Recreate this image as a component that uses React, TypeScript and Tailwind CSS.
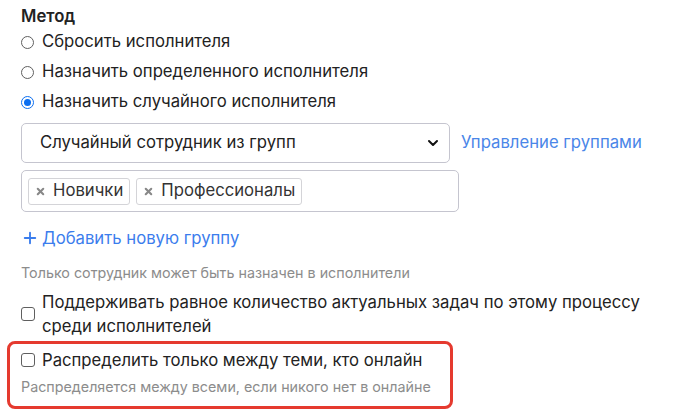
import { ChevronDown, Plus, X } from "lucide-react";

function Radio({ checked, label }: { checked?: boolean; label: string }) {
    return (
        <label className="flex items-center h-[30px] gap-[8px]">
            <span
                className={
                    checked
                        ? "w-[13px] h-[13px] rounded-full border-[1.5px] border-[#0b6ef0] flex items-center justify-center"
                        : "w-[13px] h-[13px] rounded-full border-[1.2px] border-[#5f5f5f]"
                }
            >
                {checked && <span className="w-[7px] h-[7px] rounded-full bg-[#0b6ef0]" />}
            </span>
            <span>{label}</span>
        </label>
    );
}

function Checkbox() {
    return <span className="w-[14px] h-[14px] shrink-0 rounded-[3px] border-[1.2px] border-[#5f5f5f] bg-white" />;
}

function Tag({ label }: { label: string }) {
    return (
        <span className="flex items-center h-[27px] px-[6px] gap-[7px] border border-[#d4d4d8] rounded-[3px] text-[#333]">
            <X size={11} strokeWidth={4.5} className="text-[#888]" />
            <span>{label}</span>
        </span>
    );
}

export default function App() {
    return (
        <div
            className="w-[679px] h-[412px] bg-white text-[#222] text-[16.7px] overflow-hidden"
            style={{ fontFamily: "Inter, 'Noto Sans', sans-serif" }}
        >
            <div className="pl-[21px] pt-[5px]">
                <div className="font-semibold leading-[22px]">Метод</div>
                <div className="flex flex-col">
                    <Radio label="Сбросить исполнителя" />
                    <Radio label="Назначить определенного исполнителя" />
                    <Radio checked label="Назначить случайного исполнителя" />
                </div>

                <div className="flex items-center gap-[11px] mt-[6px]">
                    <div className="w-[429px] h-[40px] border border-[#c5c5cf] rounded-[5px] flex items-center justify-between pl-[18px] pr-[8px]">
                        <span>Случайный сотрудник из групп</span>
                        <ChevronDown size={16} strokeWidth={3} className="text-[#111]" />
                    </div>
                    <a className="text-[#4a86e8]">Управление группами</a>
                </div>

                <div className="w-[438px] h-[42px] mt-[7px] border border-[#c5c5cf] rounded-[5px] flex items-center gap-[6px] px-[6px]">
                    <Tag label="Новички" />
                    <Tag label="Профессионалы" />
                </div>

                <div className="flex items-center gap-[3px] mt-[14px] text-[#3b7ded] leading-[24px]">
                    <Plus size={18} strokeWidth={2.5} />
                    <span>Добавить новую группу</span>
                </div>

                <div className="text-[14.3px] text-[#8c8c8c] mt-[13px] leading-[20px]">
                    Только сотрудник может быть назначен в исполнители
                </div>

                <div className="flex items-center gap-[7px] mt-[7px]">
                    <Checkbox />
                    <span className="leading-[24px]">
                        Поддерживать равное количество актуальных задач по этому процессу
                        <br />
                        среди исполнителей
                    </span>
                </div>
            </div>

            <div className="ml-[7px] mt-[3px] w-[446px] border-[3.5px] border-[#e53a2f] rounded-[8px] pl-[11px] pt-[4px] pb-[9px]">
                <div className="flex items-center gap-[7px] leading-[24px]">
                    <Checkbox />
                    <span>Распределить только между теми, кто онлайн</span>
                </div>
                <div className="text-[14.3px] text-[#8c8c8c] mt-[5px] leading-[20px]">
                    Распределяется между всеми, если никого нет в онлайне
                </div>
            </div>
        </div>
    );
}
